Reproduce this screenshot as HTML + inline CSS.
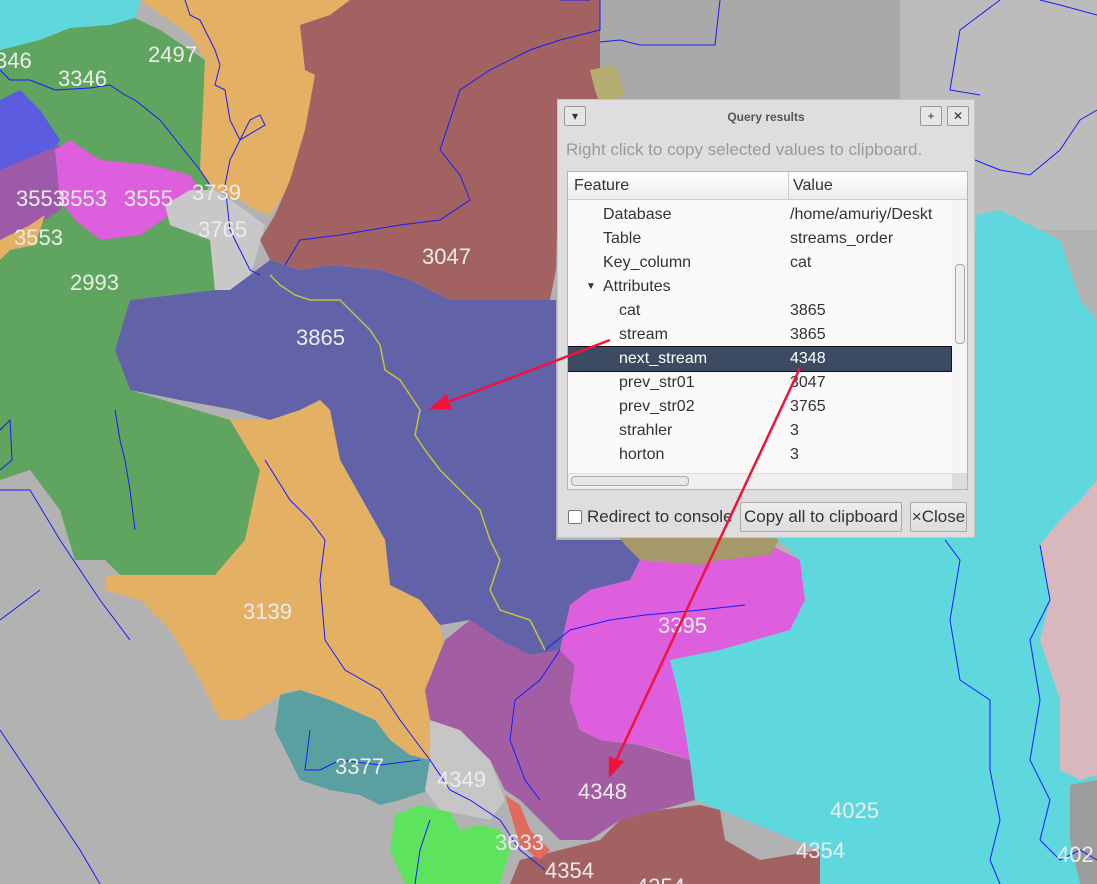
<!DOCTYPE html>
<html><head><meta charset="utf-8"><style>
body{margin:0;width:1097px;height:884px;overflow:hidden;position:relative;background:#b4b4b4;font-family:"Liberation Sans",sans-serif}
svg{position:absolute;left:0;top:0}
.lbl{font-family:"Liberation Sans",sans-serif;font-size:22px;fill:#ececec}
#dlg{position:absolute;left:557px;top:99px;width:418px;height:439px;background:#dedede;border:1px solid #c4c4c4;box-sizing:border-box;font-family:"Liberation Sans",sans-serif;white-space:nowrap}
.tb{position:absolute;width:22px;height:20px;border:1px solid #9a9a9a;border-radius:2px;background:#e6e6e6;box-sizing:border-box;font-size:12px;text-align:center;line-height:18px;color:#333}
#tbl{position:absolute;left:9px;top:71px;width:401px;height:319px;background:#fafafa;border:1px solid #b5b5b5;box-sizing:border-box;overflow:hidden}
.hd{position:absolute;top:0;height:28px;line-height:28px;font-size:16px;color:#333;background:linear-gradient(#fff,#ececec);border-bottom:1px solid #ccc;box-sizing:border-box}
.r{position:absolute;left:0;width:383px;height:24px;line-height:24px;font-size:16px;color:#333}
.r span{position:absolute}
.btn{position:absolute;top:402px;height:30px;border:1px solid #a8a8a8;border-radius:2px;background:linear-gradient(#eee,#dcdcdc);box-sizing:border-box;font-size:16px;line-height:28px;color:#333;text-align:center;white-space:nowrap;overflow:hidden}
</style></head><body>
<svg width="1097" height="884" viewBox="0 0 1097 884">
<rect width="1097" height="884" fill="#b2b2b2"/>
<rect x="590" y="0" width="507" height="220" fill="#a9a9a9"/>
<rect x="900" y="0" width="197" height="230" fill="#bcbcbc"/>
<polygon points="0,0 140,0 135,18 110,25 70,28 40,40 0,50" fill="#5ed8dc"/>
<polygon points="0,50 40,40 70,28 110,25 135,18 160,30 205,60 215,160 205,200 210,240 215,290 130,300 115,350 130,390 230,420 260,470 245,540 215,575 120,575 105,560 75,560 60,510 30,470 0,480" fill="#5fa45f"/>
<polygon points="0,100 20,90 40,110 60,140 45,170 0,190" fill="#5c5ce0"/>
<polygon points="0,170 60,145 75,175 60,210 30,230 0,240" fill="#9c5aa8"/>
<polygon points="55,150 70,140 100,160 150,165 190,175 200,190 195,200 170,215 140,235 100,240 75,220 60,200" fill="#dd5fdd"/>
<polygon points="0,240 30,225 45,215 35,245 10,250 0,260" fill="#e3b064"/>
<polygon points="165,205 190,190 215,190 245,210 265,225 255,260 250,275 230,290 215,290 210,240 170,225" fill="#c8c8c8"/>
<polygon points="140,0 350,0 330,15 300,25 305,70 315,75 305,130 300,180 280,200 270,215 255,210 240,200 215,190 200,170 205,60 190,35" fill="#e3b064"/>
<polygon points="350,0 600,0 600,110 560,125 556,270 550,300 520,300 480,305 450,300 410,280 380,270 330,265 300,270 270,260 260,240 275,215 290,180 305,130 315,75 305,70 300,25 330,15" fill="#a36262"/>
<polygon points="590,70 615,65 625,95 600,105 595,90" fill="#b6ad70"/>
<polygon points="250,275 270,260 300,270 330,265 380,270 410,280 450,300 520,300 556,300 556,540 625,540 640,560 630,580 590,590 570,605 560,650 530,655 500,640 470,620 440,625 420,600 390,585 385,540 340,460 330,410 320,400 300,410 270,420 235,410 180,400 130,390 115,350 130,300 215,290 230,290" fill="#6262a8"/>
<polygon points="230,420 270,420 300,410 320,400 330,410 340,460 385,540 390,585 420,600 440,625 445,650 430,720 445,740 430,760 410,755 390,740 375,720 330,700 290,690 240,720 220,720 200,680 170,630 140,600 105,590 105,575 120,575 215,575 245,540 260,470" fill="#e3b064"/>
<polygon points="280,695 300,690 330,700 375,720 390,740 410,755 430,760 430,790 400,800 380,805 360,795 330,790 300,780 290,760 275,730" fill="#5aa0a0"/>
<polygon points="430,720 460,730 490,760 505,800 490,820 440,810 425,790 430,760" fill="#c6c6c6"/>
<polygon points="445,640 470,620 500,640 530,655 560,650 575,665 570,700 580,730 600,740 640,745 690,760 695,800 660,810 620,820 590,840 560,840 540,820 520,800 505,790 490,760 460,730 430,720 425,690" fill="#a35ea3"/>
<polygon points="570,605 590,590 630,580 640,560 700,565 770,545 800,560 805,600 790,630 720,650 670,660 680,700 690,760 660,750 640,745 600,740 580,730 570,700 575,665 560,650" fill="#dd5fdd"/>
<polygon points="620,538 780,538 770,555 720,560 700,565 640,560 625,545" fill="#a69a6a"/>
<polygon points="776,538 976,538 976,215 1000,210 1020,220 1060,240 1080,300 1097,320 1097,884 820,884 820,850 720,810 695,800 690,760 680,700 670,660 720,650 790,630 805,600 800,560" fill="#5ed8dc"/>
<polygon points="1097,480 1080,500 1060,520 1040,545 1050,600 1040,640 1060,700 1060,770 1080,780 1097,775" fill="#d8b8bc"/>
<polygon points="1070,785 1097,780 1097,884 1080,884 1070,840" fill="#9c9c9c"/>
<polygon points="600,840 620,820 660,810 700,805 720,810 725,840 760,860 820,850 820,884 510,884 520,860 560,850" fill="#a36262"/>
<polygon points="395,815 420,805 450,812 460,830 480,825 500,830 510,850 500,884 405,884 390,850" fill="#5ee35e"/>
<polygon points="505,795 520,805 530,830 550,850 540,860 520,845" fill="#e06a5e"/>
<g fill="none" stroke="#1a1aff" stroke-width="1">
<path d="M0,70 L10,80 L30,80 L55,90 L90,88 L110,85 L125,95 L135,100 L160,120 L180,145 L200,170 L210,185"/>
<path d="M185,0 L190,15 L200,20 L215,50 L220,65 L215,85 L225,90 L230,120 L240,140 L250,120 L260,115 L265,125 L240,140 L230,160 L225,185 L230,230 L240,250 L250,270 L260,275"/>
<path d="M560,0 L590,0 M600,0 L600,30 L560,40 L530,50 L490,70 L460,90 L450,120 L440,150 L460,175 L470,200 L440,220 L400,225 L340,235 L300,240 L285,265"/>
<path d="M0,430 L10,420 L12,460 L0,470 M0,490 L30,490 L60,540 L80,570 L100,600 L130,640 M40,590 L0,620"/>
<path d="M115,410 L120,440 L125,460 L130,490 L135,530"/>
<path d="M265,460 L290,500 L310,520 L325,540 L320,580 L325,640 L345,670 L380,690 L400,720 L430,760 L450,790 L470,800 L500,820 L520,850 L545,870"/>
<path d="M310,730 L305,770 L320,770 L340,760 L380,765 L420,760"/>
<path d="M545,650 L570,630 L610,620 L645,615 L700,610 L745,605 M560,650 L540,680 L515,700 L510,740 L525,780 L540,800"/>
<path d="M0,730 L20,760 L40,790 L60,820 L80,850 L100,884 M430,820 L420,850 L415,884"/>
<path d="M720,0 L715,45 L640,45 L620,40 L600,42"/>
<path d="M1000,0 L960,30 L950,90 L980,95 M1097,110 L1080,120 L1060,150 L1030,175 L1000,170 L975,160"/>
<path d="M1097,15 L1060,5 L1040,0"/>
<path d="M1040,545 L1050,600 L1030,640 L1040,700 L1030,760 L1050,800 L1040,840 L1060,860 L1080,850 L1097,860"/>
<path d="M945,540 L960,560 L950,620 L960,680 L990,700 L990,770 L1000,820 L990,860 L1000,884"/>
</g>
<path d="M270,275 L280,285 L295,295 L310,300 L340,300 L355,315 L370,330 L380,345 L385,370 L400,380 L410,395 L420,410 L415,435 L425,450 L440,470 L460,490 L480,510 L490,540 L500,560 L490,590 L500,610 L530,620 L545,650" fill="none" stroke="#c8c040" stroke-width="1.5"/>
<text class="lbl" x="-5" y="68">346</text>
<text class="lbl" x="58" y="86">3346</text>
<text class="lbl" x="148" y="62">2497</text>
<text class="lbl" x="16" y="206">3553</text>
<text class="lbl" x="58" y="206">3553</text>
<text class="lbl" x="124" y="206">3555</text>
<text class="lbl" x="192" y="200">3739</text>
<text class="lbl" x="14" y="245">3553</text>
<text class="lbl" x="198" y="237">3765</text>
<text class="lbl" x="70" y="290">2993</text>
<text class="lbl" x="422" y="264">3047</text>
<text class="lbl" x="296" y="345">3865</text>
<text class="lbl" x="243" y="619">3139</text>
<text class="lbl" x="658" y="633">3395</text>
<text class="lbl" x="335" y="774">3377</text>
<text class="lbl" x="437" y="787">4349</text>
<text class="lbl" x="578" y="799">4348</text>
<text class="lbl" x="830" y="818">4025</text>
<text class="lbl" x="796" y="858">4354</text>
<text class="lbl" x="495" y="850">3633</text>
<text class="lbl" x="545" y="878">4354</text>
<text class="lbl" x="636" y="894">4354</text>
<text class="lbl" x="1057" y="862">402</text>
</svg>

<div id="dlg">
  <div class="tb" style="left:6px;top:6px">▾</div>
  <div style="position:absolute;left:0;right:0;top:10px;text-align:center;font-size:12px;font-weight:bold;color:#555">Query results</div>
  <div class="tb" style="left:362px;top:6px">+</div>
  <div class="tb" style="left:389px;top:6px">✕</div>
  <div style="position:absolute;left:8px;top:40px;font-size:17px;color:#9a9a9a">Right click to copy selected values to clipboard.</div>
  <div id="tbl">
    <div class="hd" style="left:0;width:220px;padding-left:6px">Feature</div>
    <div class="hd" style="left:220px;width:181px;padding-left:4px;border-left:1px solid #ccc">Value</div>
    <div class="r" style="top:31px"><span style="left:35px">Database</span><span style="left:222px">/home/amuriy/Deskt</span></div>
    <div class="r" style="top:55px"><span style="left:35px">Table</span><span style="left:222px">streams_order</span></div>
    <div class="r" style="top:79px"><span style="left:35px">Key_column</span><span style="left:222px">cat</span></div>
    <div class="r" style="top:103px"><span style="left:18px;font-size:10px">▼</span><span style="left:35px">Attributes</span></div>
    <div class="r" style="top:127px"><span style="left:51px">cat</span><span style="left:222px">3865</span></div>
    <div class="r" style="top:151px"><span style="left:51px">stream</span><span style="left:222px">3865</span></div>
    <div class="r" style="top:175px;background:#3c4b62;color:#fff;outline:1px solid #111"><span style="left:51px">next_stream</span><span style="left:222px">4348</span></div>
    <div class="r" style="top:199px"><span style="left:51px">prev_str01</span><span style="left:222px">3047</span></div>
    <div class="r" style="top:223px"><span style="left:51px">prev_str02</span><span style="left:222px">3765</span></div>
    <div class="r" style="top:247px"><span style="left:51px">strahler</span><span style="left:222px">3</span></div>
    <div class="r" style="top:271px"><span style="left:51px">horton</span><span style="left:222px">3</span></div>
    <div style="position:absolute;left:384px;top:28px;width:16px;height:273px;background:#f4f4f4"></div>
    <div style="position:absolute;left:387px;top:92px;width:8px;height:78px;border:1px solid #aaa;border-radius:4px;background:#eee"></div>
    <div style="position:absolute;left:0;top:301px;width:384px;height:16px;background:#f0f0f0;border-top:1px solid #ddd"></div>
    <div style="position:absolute;left:3px;top:304px;width:116px;height:8px;border:1px solid #aaa;border-radius:4px;background:#e8e8e8"></div>
    <div style="position:absolute;left:384px;top:301px;width:16px;height:16px;background:#ddd"></div>
  </div>
  <div style="position:absolute;left:10px;top:410px;width:12px;height:12px;border:1px solid #777;background:#fff;border-radius:2px"></div>
  <div style="position:absolute;left:29px;top:407px;font-size:17px;color:#333">Redirect to console</div>
  <div class="btn" style="left:182px;width:162px;font-size:17px">Copy all to clipboard</div>
  <div class="btn" style="left:352px;width:57px;font-size:17px">×Close</div>
</div>

<svg width="1097" height="884" viewBox="0 0 1097 884" style="pointer-events:none">
<g stroke="#f0143c" stroke-width="2.5" fill="#f0143c">
<line x1="610" y1="340" x2="440" y2="405"/>
<polygon points="432,408 446,396 450,408"/>
<line x1="800" y1="368" x2="614" y2="765"/>
<polygon points="610,775 610,758 622,762"/>
</g>
</svg>
</body></html>
